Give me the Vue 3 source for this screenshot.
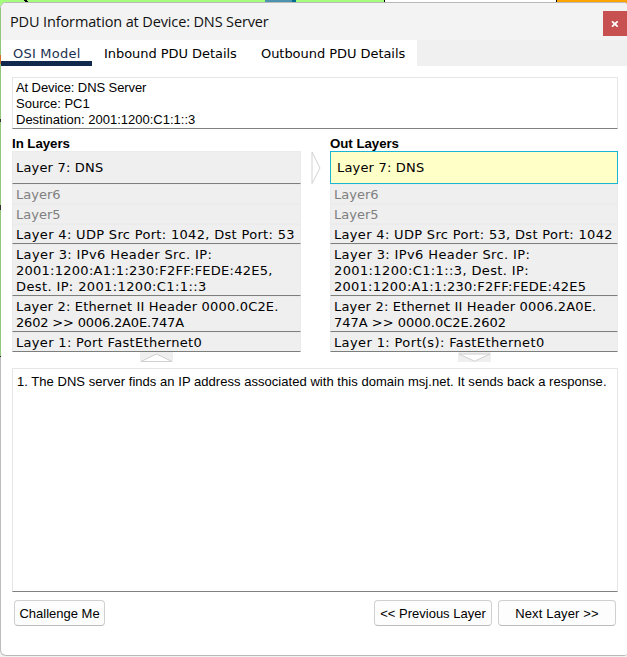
<script setup>
const tabs = ['OSI Model', 'Inbound PDU Details', 'Outbound PDU Details']
const info = ['At Device: DNS Server', 'Source: PC1', 'Destination: 2001:1200:C1:1::3']
// Each line is its text and the name of its letter tracking.
const columns = [
  {
    title: 'In Layers',
    side: 'in',
    rows: [
      { kind: 'top', lines: [['Layer 7: DNS', 'snug']] },
      { kind: 'off', lines: [['Layer6', 'plain']] },
      { kind: 'off', lines: [['Layer5', 'plain']] },
      { kind: 'on', lines: [['Layer 4: UDP Src Port: 1042, Dst Port: 53', 'wide']] },
      { kind: 'on', lines: [['Layer 3: IPv6 Header Src. IP:', 'wider'], ['2001:1200:A1:1:230:F2FF:FEDE:42E5,', 'medium'], ['Dest. IP: 2001:1200:C1:1::3', 'wider']] },
      { kind: 'on', lines: [['Layer 2: Ethernet II Header 0000.0C2E.', 'snug'], ['2602 >> 0006.2A0E.747A', 'tight']] },
      { kind: 'on', lines: [['Layer 1: Port FastEthernet0', 'wide']] }
    ]
  },
  {
    title: 'Out Layers',
    side: 'out',
    rows: [
      { kind: 'top selected', lines: [['Layer 7: DNS', 'snug']] },
      { kind: 'off', lines: [['Layer6', 'plain']] },
      { kind: 'off', lines: [['Layer5', 'plain']] },
      { kind: 'on', lines: [['Layer 4: UDP Src Port: 53, Dst Port: 1042', 'wide']] },
      { kind: 'on', lines: [['Layer 3: IPv6 Header Src. IP:', 'wider'], ['2001:1200:C1:1::3, Dest. IP:', 'wider'], ['2001:1200:A1:1:230:F2FF:FEDE:42E5', 'medium']] },
      { kind: 'on', lines: [['Layer 2: Ethernet II Header 0006.2A0E.', 'snug'], ['747A >> 0000.0C2E.2602', 'plain']] },
      { kind: 'on', lines: [['Layer 1: Port(s): FastEthernet0', 'wider']] }
    ]
  }
]
</script>

<template>
  <div class="desktop">
    <svg class="backdrop" width="627" height="657" viewBox="0 0 627 657" shape-rendering="crispEdges">
      <rect width="627" height="657" fill="#f3f3f3" />
      <rect width="384" height="356" fill="#a6ff7c" />
      <rect x="265" width="27" height="4" fill="#4d92ae" />
      <rect x="292" width="4" height="4" fill="#006c8e" />
      <rect x="384" width="1" height="4" fill="#000" />
      <rect x="385" width="171" height="4" fill="#fff" />
      <rect x="556" width="1" height="4" fill="#000" />
      <rect x="557" width="70" height="10" fill="#ffa500" />
      <path d="M23 0h3l2 2h-3z" fill="#000" />
    </svg>
    <main class="window">
      <header class="titlebar">
        <h1>PDU Information at Device: DNS Server</h1>
        <button class="close" aria-label="Close">
          <svg width="8" height="6" viewBox="0 0 8 6"><path d="M1 0.3L6.7 5.7M6.7 0.3L1 5.7" stroke="#fff" stroke-width="1.7" /></svg>
        </button>
      </header>
      <nav class="tabs">
        <div v-for="(tab, i) in tabs" :key="tab" class="tab" :class="['tab' + i, { active: i === 0 }]"><span>{{ tab }}</span></div>
      </nav>
      <section class="content">
        <div class="box info"><div v-for="(line, i) in info" :key="line" :class="{ device: i === 0 }">{{ line }}</div></div>
        <div class="columns">
          <div v-for="col in columns" :key="col.side" class="column" :class="col.side">
            <h2>{{ col.title }}</h2>
            <div v-for="(row, i) in col.rows" :key="i" class="row" :class="row.kind">
              <div v-for="[text, tracking] in row.lines" :key="text" :class="tracking">{{ text }}</div>
            </div>
            <svg v-if="col.side === 'in'" class="arrow" width="33" height="10" viewBox="0 0 33 10">
              <rect width="33" height="10" fill="#efefef" />
              <path d="M1 9.5L16.5 2L32 9.5z" fill="#fff" stroke="#d0d0d0" />
            </svg>
            <svg v-else class="arrow" width="33" height="10" viewBox="0 0 33 10">
              <rect width="33" height="10" fill="#efefef" />
              <path d="M1 2L16.5 9.2L32 2z" fill="#fff" stroke="#d0d0d0" />
            </svg>
          </div>
          <svg class="between" width="10" height="34" viewBox="0 0 10 34"><path d="M1 1v31.5L9 17z" fill="#fff" stroke="#d2d2d2" /></svg>
        </div>
        <div class="box details">1. The DNS server finds an IP address associated with this domain msj.net. It sends back a response.</div>
        <footer>
          <button class="btn challenge">Challenge Me</button>
          <button class="btn">&lt;&lt; Previous Layer</button>
          <button class="btn next">Next Layer &gt;&gt;</button>
        </footer>
      </section>
    </main>
    <svg class="edge" width="1" height="357" viewBox="0 0 1 357" shape-rendering="crispEdges">
      <rect y="8" width="1" height="348" fill="#93c57b" />
      <rect y="55" width="1" height="9" fill="#d5702a" />
      <rect y="119" width="1" height="3" fill="#333" />
      <rect y="205" width="1" height="5" fill="#333" />
      <rect y="356" width="1" height="1" fill="#222" />
    </svg>
  </div>
</template>

<style>
body { margin: 0; overflow: hidden; }
</style>

<style scoped>
* { box-sizing: border-box; }
.desktop { position: relative; width: 627px; height: 657px; padding: 2px 0 1px; overflow: hidden; font: 13px/16px "Liberation Sans", Arial, sans-serif; color: #000; }
.backdrop, .edge { position: absolute; left: 0; top: 0; }
.window { position: relative; height: 654px; border: 1px solid #b9b9b9; border-left-color: #bcbcbc; border-right: 0; border-radius: 6px 3px 3px 6px; background: #fff; overflow: hidden; }
.titlebar { display: flex; justify-content: space-between; align-items: flex-start; height: 37px; background: #f3f3f3; }
h1 { margin: 8px 0 0 9px; font: 14.5px/22px "Open Sans", sans-serif; letter-spacing: -0.13px; white-space: nowrap; color: #111; }
.close { display: flex; align-items: center; justify-content: center; width: 24px; height: 25px; margin-top: 8px; padding: 0; border: 0; background: #c75050; }
.tabs { display: flex; height: 26px; background: #f0f0f0; font-family: "DejaVu Sans", Verdana, sans-serif; }
.tab { height: 26px; padding: 6px 0 0 12px; background: #fff; white-space: nowrap; letter-spacing: -0.05px; }
.tab0 { width: 91px; letter-spacing: 0.22px; }
.tab1 { width: 157px; }
.tab2 { width: 168px; }
.active { color: #1c2f50; border-bottom: 5px solid #10294d; }
.content { padding: 11px 9px 0 11px; }
.box { border: 1px solid #e6e6e6; border-bottom-color: #808080; white-space: nowrap; }
.info { height: 52px; padding: 2px 0 0 3px; }
.device { letter-spacing: -0.09px; }
.columns { position: relative; display: flex; justify-content: space-between; height: 239px; }
.column { display: flex; flex-direction: column; width: 288px; font-family: "DejaVu Sans", Verdana, sans-serif; }
.column.in { width: 289px; }
h2 { margin: 7px 0 0; height: 15px; font: bold 13.3px/16px "Liberation Sans", Arial, sans-serif; letter-spacing: -0.05px; }
.row { background: #efefef; border: 1px solid #ebebeb; border-bottom-color: #7c7f7c; padding: 2px 0 0 3px; white-space: nowrap; }
.row.off { height: 20px; color: #808080; border-bottom-color: #ececec; }
.row.top { height: 33px; padding-top: 8px; }
.row.selected { padding-left: 6px; border-color: #1cb4d4; background: #ffffc8; }
.tight { letter-spacing: -0.18px; }
.plain { letter-spacing: 0; }
.snug { letter-spacing: 0.18px; }
.medium { letter-spacing: 0.26px; }
.wide { letter-spacing: 0.32px; }
.wider { letter-spacing: 0.38px; }
.arrow { margin-left: 128px; }
.between { position: absolute; left: 299px; top: 22px; }
.details { height: 224px; padding: 5px 0 0 4px; letter-spacing: 0.04px; }
footer { display: flex; margin: 8px 2px 0; gap: 6px; }
.btn { width: 118px; height: 26px; padding: 1px 0 0; border: 1px solid #d0d0d0; border-bottom-color: #bcbcbc; border-radius: 4px; background: #fdfdfd; color: #000; font: 13px/16px "Liberation Sans", Arial, sans-serif; white-space: nowrap; }
.challenge { width: 91px; margin-right: auto; }
.next { letter-spacing: 0.15px; }
</style>
